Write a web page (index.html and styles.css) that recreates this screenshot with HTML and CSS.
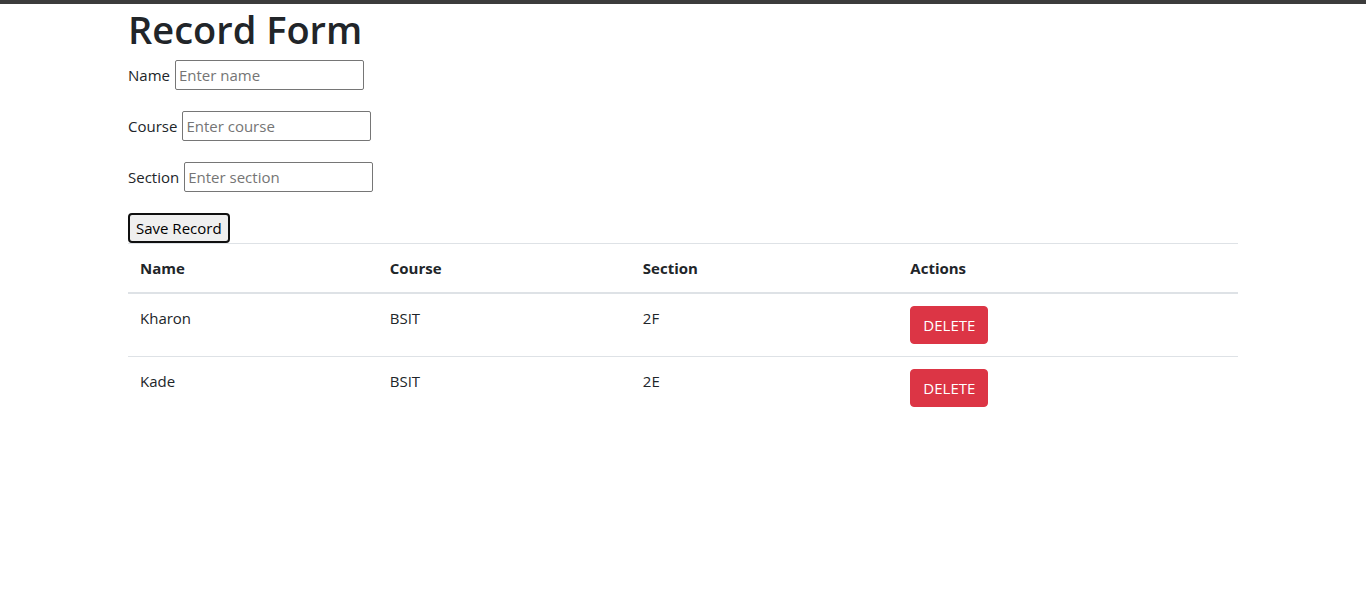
FILE: index.html
```html
<!DOCTYPE html>
<html lang="en">
<head>
<meta charset="utf-8">
<meta name="viewport" content="width=device-width, initial-scale=1">
<title>Record Form</title>
<link rel="stylesheet" href="styles.css">
</head>
<body>
<main class="container">
  <h1 class="title">Record Form</h1>
  <form class="record-form">
    <div class="field"><label for="name">Name</label><input id="name" type="text" placeholder="Enter name"></div>
    <div class="field"><label for="course">Course</label><input id="course" type="text" placeholder="Enter course"></div>
    <div class="field"><label for="section">Section</label><input id="section" type="text" placeholder="Enter section"></div>
    <button class="save" type="button">Save Record</button>
  </form>
  <table class="table">
    <colgroup><col class="col-name"><col class="col-course"><col class="col-section"><col></colgroup>
    <thead>
      <tr><th scope="col">Name</th><th scope="col">Course</th><th scope="col">Section</th><th scope="col">Actions</th></tr>
    </thead>
    <tbody>
      <tr><td>Kharon</td><td>BSIT</td><td>2F</td><td><button class="delete" type="button">DELETE</button></td></tr>
      <tr><td>Kade</td><td>BSIT</td><td>2E</td><td><button class="delete" type="button">DELETE</button></td></tr>
    </tbody>
  </table>
</main>
</body>
</html>
```
FILE: styles.css
```css
*, *::before, *::after { box-sizing: border-box; }
body {
  margin: 0;
  border-top: 4px solid #3c3c3c;
  background: #fff;
  color: #212529;
  font: 15px/24px "Segoe UI", "Open Sans", "Noto Sans", sans-serif;
}
.container { max-width: 1140px; margin: 0 auto; padding: 0 15px; }
.title { margin: 0 0 6px; font-size: 38px; line-height: 50px; font-weight: 600; }
.record-form { display: flex; flex-direction: column; align-items: flex-start; gap: 21px; }
.field { display: flex; align-items: center; gap: 5px; }
.field input {
  width: 189px;
  height: 30px;
  padding: 1px 3px;
  border: 1px solid #767676;
  border-radius: 2px;
  background: #fff;
  font: inherit;
}
.field input::placeholder { color: #757575; opacity: 1; }
.save {
  height: 30px;
  padding: 0 6px;
  border: 2px solid #101010;
  border-radius: 4px;
  background: #efefef;
  color: #000;
  font: inherit;
}
.table { width: 100%; border-collapse: collapse; table-layout: fixed; }
.col-name { width: 22.5%; }
.col-course { width: 22.8%; }
.col-section { width: 24.1%; }
.table th, .table td { padding: 12px; border-top: 1px solid #dee2e6; text-align: left; vertical-align: top; }
.table th { border-bottom: 2px solid #dee2e6; font-weight: 700; }
.delete {
  display: block;
  height: 38px;
  padding: 6px 12px;
  border: 1px solid #dc3545;
  border-radius: 4px;
  background: #dc3545;
  color: #fff;
  font: inherit;
}
```
